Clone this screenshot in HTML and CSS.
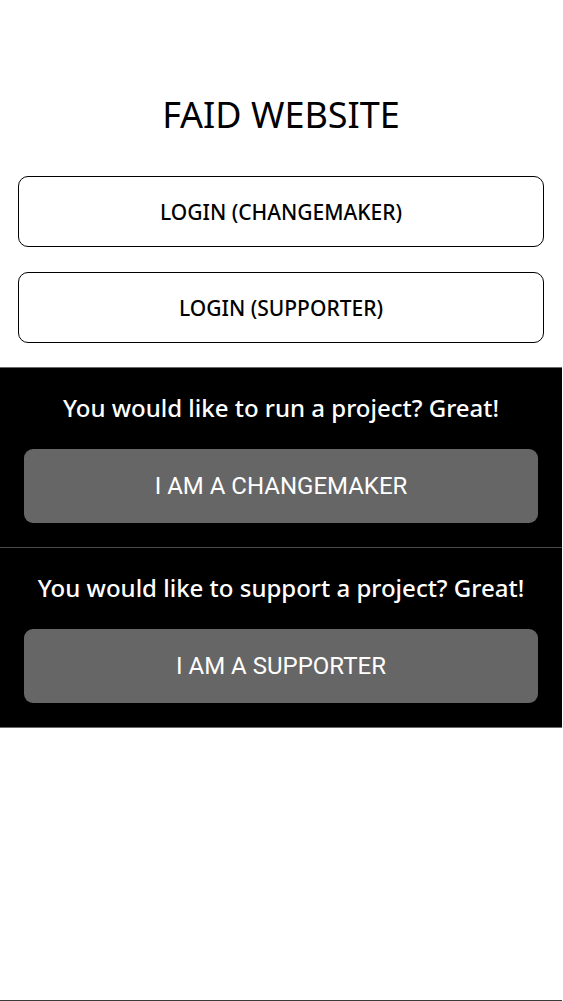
FILE: index.html
```html
<!DOCTYPE html>
<html>
<head>
<meta charset="utf-8">
<link rel="stylesheet" href="styles.css">
</head>
<body>
<div class="page">
  <h1 class="title">FAID WEBSITE</h1>
  <div class="logins">
    <button class="login">LOGIN (CHANGEMAKER)</button>
    <button class="login">LOGIN (SUPPORTER)</button>
  </div>
  <div class="cta">
    <section class="cta-block">
      <p class="cta-text">You would like to run a project? Great!</p>
      <button class="cta-btn">I AM A CHANGEMAKER</button>
    </section>
    <section class="cta-block">
      <p class="cta-text">You would like to support a project? Great!</p>
      <button class="cta-btn">I AM A SUPPORTER</button>
    </section>
  </div>
  <div class="footer-line"></div>
</div>
</body>
</html>
```
FILE: styles.css
```css
html, body {
  margin: 0;
  padding: 0;
  background: #fff;
}
.page {
  width: 562px;
  height: 1001px;
  display: flex;
  flex-direction: column;
  font-family: "Noto Sans", "Open Sans", sans-serif;
}
.title {
  margin: 91px 0 0;
  height: 48px;
  font-size: 36px;
  line-height: 48px;
  font-weight: 400;
  text-align: center;
  color: #000;
}
.logins {
  display: flex;
  flex-direction: column;
  gap: 25px;
  padding: 37px 18px 24px;
}
.login {
  height: 71px;
  border: 1px solid #000;
  border-radius: 10px;
  background: #fff;
  font-family: "Noto Sans", "Open Sans", sans-serif;
  font-size: 21px;
  font-weight: 500;
  color: #000;
  padding: 0;
}
.cta {
  background: #000;
  border-top: 1px solid #6a6a6a;
  border-bottom: 1px solid #6a6a6a;
}
.cta-block {
  display: flex;
  flex-direction: column;
  gap: 26px;
  padding: 25px 24px 24px;
}
.cta-block + .cta-block {
  border-top: 1px solid #4a4a4a;
}
.cta-text {
  margin: 0;
  height: 30px;
  font-size: 24px;
  font-weight: 500;
  line-height: 30px;
  text-align: center;
  color: #fff;
}
.cta-btn {
  height: 74px;
  border: none;
  border-radius: 9px;
  background: #666;
  color: #fff;
  font-family: Roboto, sans-serif;
  font-size: 24px;
  padding: 0;
}
.footer-line {
  margin-top: auto;
  height: 1px;
  background: #3a3a3a;
}
```
